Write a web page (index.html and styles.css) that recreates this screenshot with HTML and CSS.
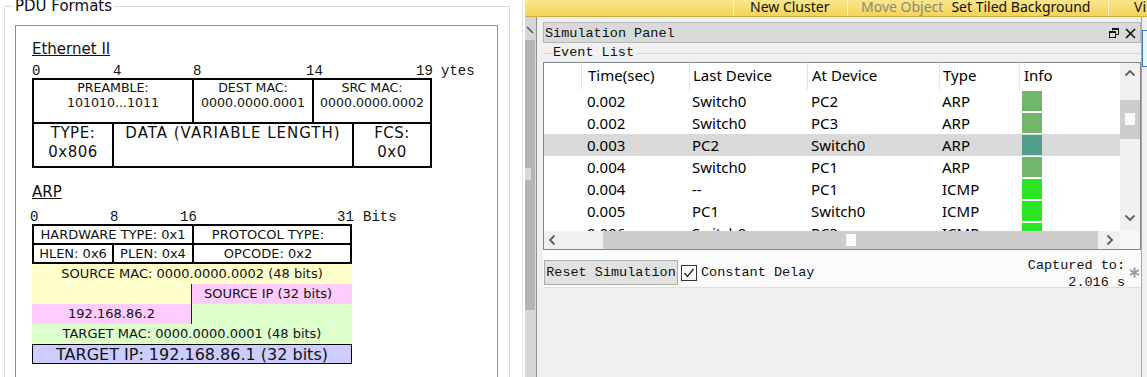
FILE: index.html
```html
<!DOCTYPE html>
<html>
<head>
    <title>PDU Formats - Simulation Panel</title>
    <link rel="stylesheet" href="styles.css">
</head>
<body>
<div class="app">
    <div class="pdu-pane">
        <fieldset class="pdu-group">
            <legend>PDU Formats</legend>
            <div class="pdu-box">
                <h3 class="pdu-title">Ethernet II</h3>
                <div class="ruler eth-ruler">
                    <span>0</span><span>4</span><span>8</span><span>14</span><span>19</span><span>ytes</span>
                </div>
                <div class="eth-table">
                    <div class="eth-row">
                        <div class="eth-cell w-pre">PREAMBLE:<br>101010...1011</div>
                        <div class="eth-cell w-dst">DEST MAC:<br>0000.0000.0001</div>
                        <div class="eth-cell w-src">SRC MAC:<br>0000.0000.0002</div>
                    </div>
                    <div class="eth-row big">
                        <div class="eth-cell w-type">TYPE:<br>0x806</div>
                        <div class="eth-cell w-data">DATA (VARIABLE LENGTH)</div>
                        <div class="eth-cell w-fcs">FCS:<br>0x0</div>
                    </div>
                </div>

                <h3 class="pdu-title arp-title">ARP</h3>
                <div class="ruler arp-ruler">
                    <span>0</span><span>8</span><span>16</span><span>31</span><span>Bits</span>
                </div>
                <div class="arp-head">
                    <div class="arp-cell span2">HARDWARE TYPE: 0x1</div>
                    <div class="arp-cell sep proto">PROTOCOL TYPE:</div>
                    <div class="arp-cell top">HLEN: 0x6</div>
                    <div class="arp-cell top sep">PLEN: 0x4</div>
                    <div class="arp-cell top sep opcode">OPCODE: 0x2</div>
                </div>
                <div class="arp-body">
                    <div class="arp-fill yellow span2">SOURCE MAC: 0000.0000.0002 (48 bits)</div>
                    <div class="arp-fill yellow split"></div>
                    <div class="arp-fill pink shift">SOURCE IP (32 bits)</div>
                    <div class="arp-fill pink split">192.168.86.2</div>
                    <div class="arp-fill green"></div>
                    <div class="arp-fill green span2">TARGET MAC: 0000.0000.0001 (48 bits)</div>
                </div>
                <div class="arp-target">TARGET IP: 192.168.86.1 (32 bits)</div>
            </div>
        </fieldset>
    </div>

    <div class="sim-area">
        <div class="toolbar">
            <div class="tb-gap"></div>
            <div class="tb-sep"></div>
            <div class="tb-item tb-cluster">New Cluster</div>
            <div class="tb-sep"></div>
            <div class="tb-item tb-object"><span class="muted">Move Object</span><span>Set Tiled Background</span></div>
            <div class="tb-sep"></div>
            <div class="tb-item tb-view">Vi</div>
        </div>

        <div class="sim-body">
            <div class="splitter">
                <svg class="grip" width="8" height="8" viewBox="0 0 8 8"><path d="M1 1L7 7" stroke="#555" stroke-width="1.6"/></svg>
                <div class="split-thumb"><span></span></div>
            </div>

            <div class="sim-main">
                <div class="titlebar">
                    <span>Simulation Panel</span>
                    <div class="title-icons">
                        <svg width="10" height="10" viewBox="0 0 10 10">
                            <path d="M3.5 2.5V0.5H9.5V6.5H7" fill="none" stroke="#111"/>
                            <rect x="0.5" y="3.5" width="6" height="6" fill="none" stroke="#111"/>
                            <path d="M0 4H7M3 1H10" stroke="#111" stroke-width="2"/>
                        </svg>
                        <svg width="11" height="11" viewBox="0 0 11 11">
                            <path d="M1 1L10 10M10 1L1 10" stroke="#111" stroke-width="1.6"/>
                        </svg>
                    </div>
                </div>

                <fieldset class="event-group">
                    <legend>Event List</legend>
                </fieldset>

                <div class="events">
                    <div class="list">
                        <div class="ev-row ev-head">
                            <div></div>
                            <div class="c-time">Time(sec)</div>
                            <div class="c-last">Last Device</div>
                            <div class="c-at">At Device</div>
                            <div class="c-type">Type</div>
                            <div class="c-info">Info</div>
                        </div>
                        <div class="ev-row">
                            <div></div><div class="c-time">0.002</div><div class="c-last">Switch0</div><div class="c-at">PC2</div><div class="c-type">ARP</div><div class="c-info"><i class="sq arp"></i></div>
                        </div>
                        <div class="ev-row">
                            <div></div><div class="c-time">0.002</div><div class="c-last">Switch0</div><div class="c-at">PC3</div><div class="c-type">ARP</div><div class="c-info"><i class="sq arp"></i></div>
                        </div>
                        <div class="ev-row selected">
                            <div></div><div class="c-time">0.003</div><div class="c-last">PC2</div><div class="c-at">Switch0</div><div class="c-type">ARP</div><div class="c-info"><i class="sq arp-sel"></i></div>
                        </div>
                        <div class="ev-row">
                            <div></div><div class="c-time">0.004</div><div class="c-last">Switch0</div><div class="c-at">PC1</div><div class="c-type">ARP</div><div class="c-info"><i class="sq arp"></i></div>
                        </div>
                        <div class="ev-row">
                            <div></div><div class="c-time">0.004</div><div class="c-last">--</div><div class="c-at">PC1</div><div class="c-type">ICMP</div><div class="c-info"><i class="sq icmp"></i></div>
                        </div>
                        <div class="ev-row">
                            <div></div><div class="c-time">0.005</div><div class="c-last">PC1</div><div class="c-at">Switch0</div><div class="c-type">ICMP</div><div class="c-info"><i class="sq icmp"></i></div>
                        </div>
                        <div class="ev-row">
                            <div></div><div class="c-time">0.006</div><div class="c-last">Switch0</div><div class="c-at">PC3</div><div class="c-type">ICMP</div><div class="c-info"><i class="sq icmp"></i></div>
                        </div>
                    </div>
                    <div class="vscroll">
                        <svg class="arrow" width="12" height="8" viewBox="0 0 12 8"><path d="M1.5 6.5L6 2L10.5 6.5" fill="none" stroke="#606060" stroke-width="1.8"/></svg>
                        <div class="v-thumb"><span></span></div>
                        <svg class="arrow down" width="12" height="8" viewBox="0 0 12 8"><path d="M1.5 1.5L6 6L10.5 1.5" fill="none" stroke="#606060" stroke-width="1.8"/></svg>
                    </div>
                    <div class="hscroll">
                        <svg class="arrow" width="8" height="12" viewBox="0 0 8 12"><path d="M6.5 1.5L2 6L6.5 10.5" fill="none" stroke="#606060" stroke-width="1.8"/></svg>
                        <div class="h-thumb"><span></span></div>
                        <svg class="arrow" width="8" height="12" viewBox="0 0 8 12"><path d="M1.5 1.5L6 6L1.5 10.5" fill="none" stroke="#606060" stroke-width="1.8"/></svg>
                    </div>
                    <div class="corner"></div>
                </div>

                <div class="controls">
                    <button type="button" class="reset-btn">Reset Simulation</button>
                    <label class="delay">
                        <span class="check">
                            <svg width="14" height="14" viewBox="0 0 14 14"><path d="M2.5 7L5.5 10.5L11.5 3" fill="none" stroke="#222" stroke-width="1.3"/></svg>
                        </span>
                        Constant Delay
                    </label>
                    <div class="captured">Captured to:<br>2.016 s</div>
                    <svg class="star" width="11" height="11" viewBox="0 0 11 11">
                        <path d="M5.5 0.5V10.5M1 3L10 8M10 3L1 8" stroke="#9a9aa4" stroke-width="2"/>
                    </svg>
                </div>
            </div>

            <div class="sim-edge">
                <div class="edge-box"></div>
            </div>
        </div>
    </div>
</div>
</body>
</html>
```

FILE: styles.css
```css
* {
    box-sizing: border-box;
}

body {
    margin: 0;
    width: 1147px;
    height: 377px;
    overflow: hidden;
    background-color: #fff;
    font-family: "DejaVu Sans", Verdana, sans-serif;
    color: #111;
}

.app {
    display: flex;
    height: 377px;
}

/* left: PDU formats */

.pdu-pane {
    flex: none;
    width: 523px;
    height: 377px;
    border-right: 1px solid #e3e3e3;
    overflow: hidden;
}

.pdu-group {
    margin: -3px 0 0 4px;
    width: 506px;
    height: 420px;
    padding: 0;
    border: 1px solid #dcdcdc;
}

.pdu-group legend {
    margin-left: 8px;
    padding: 0 2px;
    font-size: 15px;
    line-height: 18px;
    color: #0c0c1c;
}

.pdu-box {
    margin: 10px 11px 0 10px;
    height: 400px;
    padding: 14px 0 0 16px;
    border: 1px solid #8b8d99;
}

.pdu-title {
    margin: 0;
    font-size: 15px;
    line-height: 18px;
    font-weight: normal;
    text-decoration: underline;
}

.arp-title {
    margin-top: 15px;
}

.ruler {
    display: grid;
    height: 14px;
    font-family: "Liberation Mono", monospace;
    font-size: 14px;
    line-height: 14px;
}

.eth-ruler {
    margin-top: 6px;
    grid-template-columns: 81px 80px 113px 110px 25px auto;
}

.arp-ruler {
    margin: 9px 0 0 -2px;
    grid-template-columns: 80px 70px 157px 26px auto;
}

.eth-table {
    width: 400px;
    border: 2px solid #000;
    font-size: 12.6px;
    line-height: 15px;
}

.eth-row {
    display: flex;
    height: 42px;
}

.eth-row + .eth-row {
    height: 44px;
    border-top: 2px solid #000;
}

.eth-row.big {
    font-size: 15px;
    line-height: 19px;
    letter-spacing: 0.5px;
}

.eth-cell {
    text-align: center;
}

.eth-cell + .eth-cell {
    border-left: 2px solid #000;
}

.w-pre { width: 158px; }
.w-dst { width: 120px; }
.w-src { width: 118px; }
.w-type { width: 78px; }
.w-data { width: 240px; letter-spacing: 1px; }
.w-fcs { width: 78px; }

.arp-head {
    display: grid;
    grid-template-columns: 78px 80px 158px;
    width: 320px;
    border: 2px solid #000;
    font-size: 13px;
}

.arp-cell {
    height: 17px;
    line-height: 17px;
    text-align: center;
}

.arp-cell.top {
    height: 19px;
    border-top: 2px solid #000;
}

.arp-cell.sep {
    border-left: 2px solid #000;
}

.arp-cell.proto,
.arp-cell.opcode {
    padding-right: 8px;
}

.span2 {
    grid-column: span 2;
}

.arp-body {
    display: grid;
    grid-template-columns: 160px 160px;
    width: 320px;
    font-size: 13px;
}

.arp-fill {
    height: 20px;
    line-height: 20px;
    text-align: center;
}

.arp-fill.split {
    border-right: 1px solid #222;
}

.arp-fill.shift {
    padding-right: 8px;
}

.yellow { background-color: #ffffcc; }
.pink { background-color: #ffccff; }
.green { background-color: #ddffcc; }

.arp-target {
    width: 320px;
    height: 20px;
    border: 1px solid #000;
    background-color: #ccccff;
    font-size: 16px;
    line-height: 20px;
    text-align: center;
    white-space: nowrap;
    overflow: hidden;
}

/* right: simulation area */

.sim-area {
    flex: none;
    display: flex;
    flex-direction: column;
    width: 622px;
    margin-left: 2px;
}

.toolbar {
    display: flex;
    flex: none;
    height: 17px;
    background: linear-gradient(#fbe68a, #f3d35b);
    border-bottom: 1px solid #d2ae3e;
    font-family: "Noto Sans", sans-serif;
    font-size: 14px;
    line-height: 14px;
    color: #111;
    white-space: nowrap;
    overflow: hidden;
}

.tb-gap {
    width: 208px;
}

.tb-sep {
    width: 1px;
    background-color: #fff4c4;
}

.tb-cluster {
    width: 113px;
    padding-left: 16px;
}

.tb-object {
    width: 260px;
    padding-left: 13px;
}

.tb-object .muted {
    margin-right: 8px;
    color: #8c8a80;
}

.tb-view {
    padding-left: 25px;
}

.sim-body {
    display: flex;
    flex: 1;
    background-color: #f0f0f0;
}

.splitter {
    flex: none;
    width: 12px;
    padding-top: 9px;
    background-color: #d6d6d6;
    border-right: 1px solid #8d8f99;
}

.grip {
    display: block;
    margin-left: 1px;
}

.split-thumb {
    width: 10px;
    height: 270px;
    margin-top: 6px;
    padding-top: 128px;
    background-color: #b4b4b4;
}

.split-thumb span {
    display: block;
    width: 6px;
    height: 12px;
    background-color: #dadada;
}

.sim-main {
    width: 604px;
    padding-left: 6px;
    font-family: "Liberation Mono", monospace;
    font-size: 13.5px;
}

.titlebar {
    display: flex;
    align-items: center;
    justify-content: space-between;
    height: 21px;
    margin-top: 5px;
    padding: 1px 4px 0 1px;
    background-color: #d9d9d9;
    border: 1px solid #b6b6b6;
    color: #111;
}

.title-icons {
    display: flex;
    align-items: center;
    gap: 6px;
}

.event-group {
    margin: 2px 0 0;
    padding: 0;
    border: none;
    border-top: 1px solid #d6d6d6;
}

.event-group legend {
    margin-left: 8px;
    padding: 0 2px;
    line-height: 16px;
}

.events {
    display: grid;
    grid-template-columns: 1fr 20px;
    grid-template-rows: 168px 18px;
    height: 188px;
    margin-top: 1px;
    background-color: #fff;
    border: 1px solid #82858f;
    font-family: "Noto Sans", sans-serif;
    font-size: 15px;
    color: #000;
}

.list {
    overflow: hidden;
}

.ev-row {
    display: grid;
    grid-template-columns: 37px 108px 118px 132px 80px 100px;
    align-items: center;
    height: 22px;
    white-space: nowrap;
}

.ev-row.ev-head {
    align-items: stretch;
    height: 27px;
}

.ev-head > div {
    display: flex;
    align-items: center;
    padding-bottom: 3px;
}

.ev-head > div + div {
    border-left: 1px solid #e6e6e6;
}

.ev-row.selected {
    background-color: #d9d9d9;
}

.c-time { padding-left: 6px; }
.c-last { padding-left: 3px; }
.c-at { padding-left: 4px; }
.c-type { padding-left: 3px; }
.c-info { padding-left: 3px; }
.ev-head .c-info { padding-left: 4px; }

.sq {
    display: block;
    width: 20px;
    height: 20px;
}

.sq.arp { background-color: #72b66b; }
.sq.arp-sel { background-color: #4fa08a; }
.sq.icmp { background-color: #2be524; }

.vscroll {
    display: flex;
    flex-direction: column;
    align-items: center;
    background-color: #f0f0f0;
}

.vscroll .arrow {
    margin-top: 6px;
}

.vscroll .arrow.down {
    margin-top: auto;
    margin-bottom: 9px;
}

.v-thumb {
    width: 100%;
    height: 39px;
    margin-top: 23px;
    padding: 13px 0 0 5px;
    background-color: #cdcdcd;
}

.v-thumb span,
.h-thumb span {
    display: block;
    width: 10px;
    height: 12px;
    background-color: #fafafa;
}

.hscroll {
    display: flex;
    align-items: center;
    padding-left: 4px;
    background-color: #f0f0f0;
}

.h-thumb {
    display: flex;
    align-items: center;
    justify-content: center;
    width: 495px;
    height: 18px;
    margin: 0 8px 0 47px;
    background-color: #cdcdcd;
}

.corner {
    background-color: #f7f7f7;
}

.controls {
    display: flex;
    align-items: flex-start;
    height: 38px;
    padding: 10px 0 0 1px;
    background-color: #fbfbfb;
    border-bottom: 1px solid #dedede;
    color: #111;
}

.reset-btn {
    height: 25px;
    width: 134px;
    padding: 0;
    font-family: inherit;
    font-size: inherit;
    color: #111;
    background-color: #e1e1e1;
    border: 1px solid #adadad;
    border-radius: 0;
}

.delay {
    display: flex;
    align-items: center;
    gap: 4px;
    height: 25px;
    margin-left: 3px;
}

.check {
    display: flex;
    align-items: center;
    justify-content: center;
    width: 16px;
    height: 16px;
    background-color: #fff;
    border: 1px solid #333;
}

.captured {
    margin-left: auto;
    margin-top: -3px;
    line-height: 17px;
    text-align: right;
}

.star {
    margin: 7px 1px 0 4px;
}

.sim-edge {
    flex: 1;
    border-left: 1px solid #a8a8a8;
    padding-top: 13px;
}

.edge-box {
    height: 37px;
    background-color: #eef5fc;
    border: 1px solid #3d7ab8;
    border-right: none;
}
```
